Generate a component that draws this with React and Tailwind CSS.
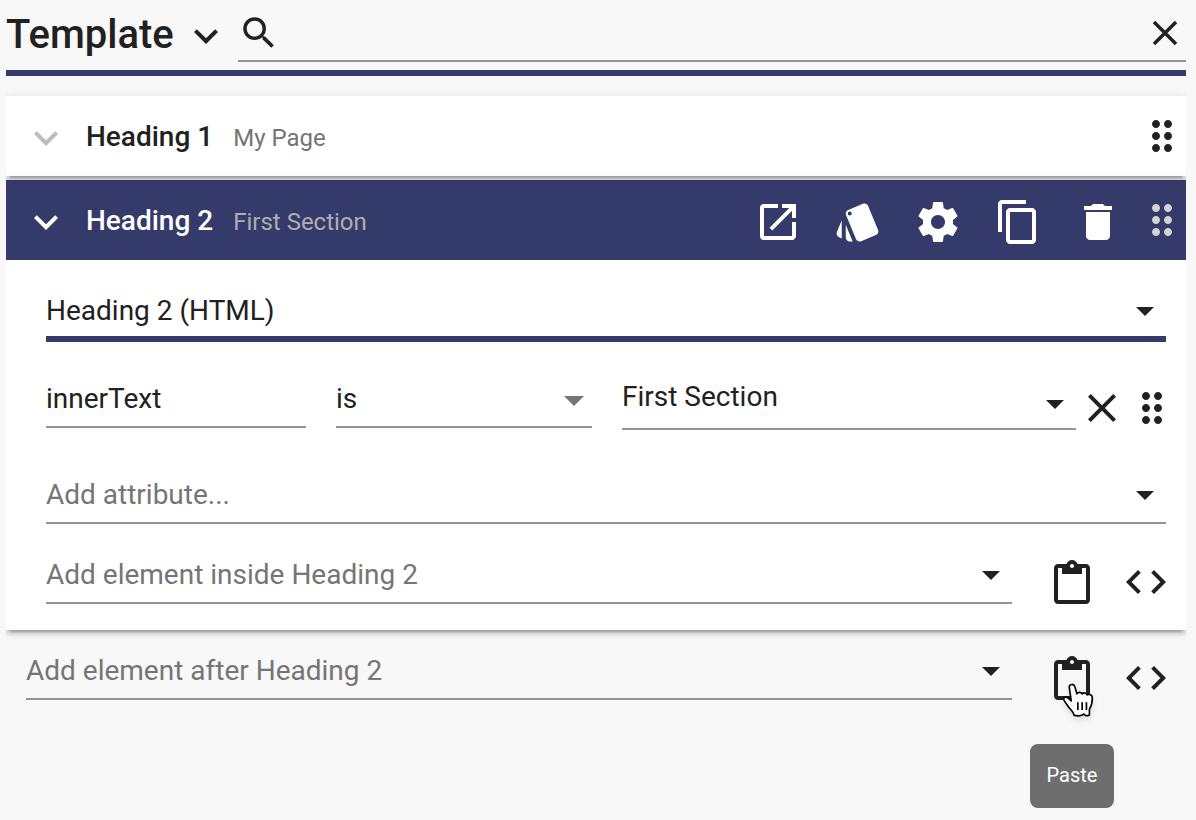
import React, { useState } from 'react';

const paths = {
  chevron: 'M7.41 8.59 12 13.17l4.59-4.58L18 10l-6 6-6-6z',
  search:
    'M15.5 14h-.79l-.28-.27A6.471 6.471 0 0 0 16 9.5 6.5 6.5 0 1 0 9.5 16c1.61 0 3.09-.59 4.23-1.57l.27.28v.79l5 4.99L20.49 19l-4.99-5zm-6 0C7.01 14 5 11.99 5 9.5S7.01 5 9.5 5 14 7.01 14 9.5 11.99 14 9.5 14z',
  close: 'M19 6.41L17.59 5 12 10.59 6.41 5 5 6.41 10.59 12 5 17.59 6.41 19 12 13.41 17.59 19 19 17.59 13.41 12z',
  drag: 'M11 18c0 1.1-.9 2-2 2s-2-.9-2-2 .9-2 2-2 2 .9 2 2zm-2-8c-1.1 0-2 .9-2 2s.9 2 2 2 2-.9 2-2-.9-2-2-2zm0-6c-1.1 0-2 .9-2 2s.9 2 2 2 2-.9 2-2-.9-2-2-2zm6 4c1.1 0 2-.9 2-2s-.9-2-2-2-2 .9-2 2 .9 2 2 2zm0 2c-1.1 0-2 .9-2 2s.9 2 2 2 2-.9 2-2-.9-2-2-2zm0 6c-1.1 0-2 .9-2 2s.9 2 2 2 2-.9 2-2-.9-2-2-2z',
  open: 'M19 19H5V5h7V3H5a2 2 0 0 0-2 2v14a2 2 0 0 0 2 2h14c1.1 0 2-.9 2-2v-7h-2v7zM14 3v2h3.59l-9.83 9.83 1.41 1.41L19 6.41V10h2V3h-7z',
  style:
    'M2.53 19.65l1.34.56v-9.03l-2.43 5.86c-.41 1.02.08 2.19 1.09 2.61zm19.5-3.7L17.07 3.98c-.31-.75-1.04-1.21-1.81-1.23-.26 0-.53.04-.79.15L7.1 5.95c-.75.31-1.21 1.03-1.23 1.8-.01.27.04.54.15.8l4.96 11.97c.31.76 1.05 1.22 1.83 1.23.26 0 .52-.05.77-.15l7.36-3.05c1.02-.42 1.51-1.59 1.09-2.6zM7.88 8.75c-.55 0-1-.45-1-1s.45-1 1-1 1 .45 1 1-.45 1-1 1zm-2 11c0 1.1.9 2 2 2h1.45l-3.45-8.34v6.34z',
  settings:
    'M19.43 12.98c.04-.32.07-.64.07-.98s-.03-.66-.07-.98l2.11-1.65c.19-.15.24-.42.12-.64l-2-3.46c-.12-.22-.39-.3-.61-.22l-2.49 1c-.52-.4-1.08-.73-1.69-.98l-.38-2.65C14.46 2.18 14.25 2 14 2h-4c-.25 0-.46.18-.49.42l-.38 2.65c-.61.25-1.17.59-1.69.98l-2.49-1c-.23-.09-.49 0-.61.22l-2 3.46c-.13.22-.07.49.12.64l2.11 1.65c-.04.32-.07.65-.07.98s.03.66.07.98l-2.11 1.65c-.19.15-.24.42-.12.64l2 3.46c.12.22.39.3.61.22l2.49-1c.52.4 1.08.73 1.69.98l.38 2.65c.03.24.24.42.49.42h4c.25 0 .46-.18.49-.42l.38-2.65c.61-.25 1.17-.59 1.69-.98l2.49 1c.23.09.49 0 .61-.22l2-3.46c.12-.22.07-.49-.12-.64l-2.11-1.65zM12 15.5c-1.93 0-3.5-1.57-3.5-3.5s1.57-3.5 3.5-3.5 3.5 1.57 3.5 3.5-1.57 3.5-3.5 3.5z',
  copy: 'M16 1H4c-1.1 0-2 .9-2 2v14h2V3h12V1zm3 4H8c-1.1 0-2 .9-2 2v14c0 1.1.9 2 2 2h11c1.1 0 2-.9 2-2V7c0-1.1-.9-2-2-2zm0 16H8V7h11v14z',
  remove: 'M6 19c0 1.1.9 2 2 2h8c1.1 0 2-.9 2-2V7H6v12zM19 4h-3.5l-1-1h-5l-1 1H5v2h14V4z',
  paste:
    'M19 2h-4.18C14.4.84 13.3 0 12 0c-1.3 0-2.4.84-2.82 2H5c-1.1 0-2 .9-2 2v16c0 1.1.9 2 2 2h14c1.1 0 2-.9 2-2V4c0-1.1-.9-2-2-2zm-7 0c.55 0 1 .45 1 1s-.45 1-1 1-1-.45-1-1 .45-1 1-1zm7 18H5V4h2v3h10V4h2v16z',
  code: 'M9.4 16.6L4.8 12l4.6-4.6L8 6l-6 6 6 6 1.4-1.4zm5.2 0l4.6-4.6-4.6-4.6L16 6l6 6-6 6-1.4-1.4z',
};

const Icon = ({ name, viewBox = '0 0 24 24', size = 'size-12' }) => (
  <svg viewBox={viewBox} className={`block ${size}`} fill="currentColor" aria-hidden="true">
    <path d={paths[name]} />
  </svg>
);

const IconButton = ({ label, className = '', ...icon }) => (
  <button type="button" aria-label={label} className={`shrink-0 ${className}`}>
    <Icon {...icon} />
  </button>
);

const DragHandle = ({ className }) => (
  <IconButton label="Drag to move" name="drag" viewBox="5 0 14 24" size="h-12 w-7" className={className} />
);

const Dropdown = ({
  label,
  options,
  placeholder,
  className = 'border-b-2 border-[#949494] pb-3',
  arrowClass = 'mt-0.5',
  wide,
}) => {
  const [value, setValue] = useState(placeholder ? '' : options[0]);

  return (
    <div className={`grid min-w-0 items-center ${className}`}>
      <select
        aria-label={label}
        value={value}
        onChange={(e) => setValue(e.target.value)}
        className={`col-start-1 row-start-1 -my-0.5 h-9 w-full appearance-none bg-transparent pt-0.5 text-[28px] leading-8 outline-none ${
          value ? 'text-[#212121]' : 'text-[#757575]'
        }`}
      >
        {placeholder && (
          <option value="" disabled>
            {placeholder}
          </option>
        )}
        {options.map((option) => (
          <option key={option}>{option}</option>
        ))}
      </select>
      <div className={`pointer-events-none col-start-1 row-start-1 justify-self-end ${arrowClass}`}>
        {wide ? (
          <svg viewBox="0 0 20 10" className="mr-2 h-2.5 w-5">
            <path d="M0 0h20L10 10z" fill="#757575" />
          </svg>
        ) : (
          <svg viewBox="0 0 18 9" className="mr-3 h-[9px] w-[18px]">
            <path d="M0 0h18L9 9z" fill="#212121" />
          </svg>
        )}
      </div>
    </div>
  );
};

const PointerHand = () => (
  <svg
    viewBox="184 428 98 106"
    className="pointer-events-none absolute left-3.5 top-[29px] z-10 h-[35px] w-[33px] drop-shadow-md"
    aria-hidden="true"
  >
    <path
      d="M205 441c0-10 14-12 17-2l6 22c3-6 13-6 16 0 4-5 13-3 15 3 7-4 16 0 16 9 0 17-3 25-9 35v17c-6 3-13 3-17-3-5 6-18 6-29 4-2-10-10-17-16-24-6-9-13-17-16-24 0-8 8-9 14-4l9 8z"
      fill="#fff"
      stroke="#000"
      strokeWidth="5"
      strokeLinejoin="round"
    />
    <path d="M231 486v24M244 486v24M257 486v24" stroke="#000" strokeWidth="5" />
  </svg>
);

const AddElementRow = ({ label, hovered, className = '' }) => (
  <div className={`flex items-start ${className}`}>
    <Dropdown
      label={label}
      placeholder={label}
      options={['Heading 1', 'Heading 2', 'Paragraph']}
      className="flex-1 border-b-2 border-[#949494] pb-3"
    />
    <div className="relative ml-9 shrink-0">
      <IconButton label="Paste" name="paste" viewBox="0 -1 24 24" className="block" />
      {hovered && (
        <>
          <PointerHand />
          <div
            role="tooltip"
            className="absolute left-1/2 top-[90px] flex h-16 w-[84px] -translate-x-1/2 items-center justify-center rounded-lg bg-[#6e6e6e] pb-0.5 text-xl text-white"
          >
            Paste
          </div>
        </>
      )}
    </div>
    <IconButton label="Edit as code" name="code" viewBox="2 0 20 24" size="h-12 w-10" className="ml-[30px]" />
  </div>
);

const cardShadow =
  'shadow-[0_4px_4px_0_rgba(0,0,0,0.14),0_2px_10px_0_rgba(0,0,0,0.12),0_6px_2px_-4px_rgba(0,0,0,0.2)]';

const ElementHeader = ({ title, subtitle, active }) => (
  <header className={`flex h-20 items-center pl-4 pr-2.5 ${active ? 'bg-[#343a69] text-white' : ''}`}>
    <IconButton label={`Toggle ${title}`} name="chevron" className={`mt-1 ${active ? '' : 'text-[#bdbdbd]'}`} />
    <h2 className="ml-4 mt-0.5 flex flex-1 items-baseline gap-5 whitespace-nowrap text-[28px] font-medium leading-8">
      {title}
      <span className={`text-2xl font-normal ${active ? 'text-[#aeaeae]' : 'text-[#757575]'}`}>{subtitle}</span>
    </h2>
    {active && (
      <div className="mr-[26px] mt-1 flex gap-8">
        <IconButton label="Open" name="open" />
        <IconButton label="Style" name="style" />
        <IconButton label="Settings" name="settings" />
        <IconButton label="Duplicate" name="copy" />
        <IconButton label="Delete" name="remove" />
      </div>
    )}
    <DragHandle className={active ? 'text-[#d4d4d4]' : ''} />
  </header>
);

const App = () => {
  const [query, setQuery] = useState('');
  const [attribute, setAttribute] = useState('innerText');

  return (
    <div className="min-h-screen bg-[#f8f8f8] pl-1.5 pr-2.5 font-[Roboto,sans-serif] text-[#212121]">
      <header className="flex items-start gap-2 border-b-[6px] border-[#343a69] pb-2 pt-3">
        <h1 className="text-[40px] font-medium leading-[46px]">Template</h1>
        <IconButton label="Template menu" name="chevron" />
        <div className="flex flex-1 items-center border-b-2 border-[#949494] pb-1.5">
          <Icon name="search" size="size-[42px]" />
          <input
            type="search"
            aria-label="Search"
            value={query}
            onChange={(e) => setQuery(e.target.value)}
            className="h-8 min-w-0 flex-1 bg-transparent text-[28px] outline-none"
          />
          <IconButton label="Close" name="close" size="size-[42px]" />
        </div>
      </header>

      <main>
        <div className="overflow-x-clip pt-5">
          <section className={`bg-white ${cardShadow}`}>
            <ElementHeader title="Heading 1" subtitle="My Page" />
          </section>

          <section className={`mt-1 bg-white ${cardShadow}`}>
            <ElementHeader title="Heading 2" subtitle="First Section" active />
            <div className="pb-6 pl-10 pr-5 pt-[34px]">
              <Dropdown
                label="Element type"
                options={['Heading 2 (HTML)']}
                className="border-b-[6px] border-[#343a69] pb-2.5"
              />
              <div className="mt-[38px] flex items-start">
                <div className="grid flex-1 grid-cols-[260fr_256fr_454fr] items-start gap-[30px]">
                  <input
                    type="text"
                    aria-label="Attribute"
                    value={attribute}
                    onChange={(e) => setAttribute(e.target.value)}
                    className="mt-0.5 h-[46px] min-w-0 border-b-2 border-[#949494] bg-transparent pb-3 text-[28px] leading-8 outline-none"
                  />
                  <Dropdown
                    label="Condition"
                    options={['is', 'is not']}
                    className="mt-0.5 border-b-2 border-[#949494] pb-3"
                    arrowClass="mt-1.5"
                    wide
                  />
                  <Dropdown
                    label="Value"
                    options={['First Section']}
                    className="border-b-2 border-[#949494] pb-4"
                    arrowClass="mt-4"
                  />
                </div>
                <div className="ml-0.5 mt-1 flex gap-3">
                  <IconButton label="Remove attribute" name="close" />
                  <DragHandle />
                </div>
              </div>
              <Dropdown
                label="Add attribute"
                placeholder="Add attribute..."
                options={['id', 'class', 'title']}
                className="mt-[46px] border-b-2 border-[#949494] pb-3"
              />
              <AddElementRow label="Add element inside Heading 2" className="mt-[34px]" />
            </div>
          </section>
        </div>

        <AddElementRow label="Add element after Heading 2" className="pl-5 pr-5 pt-6" hovered />
      </main>
    </div>
  );
};

export default App;
